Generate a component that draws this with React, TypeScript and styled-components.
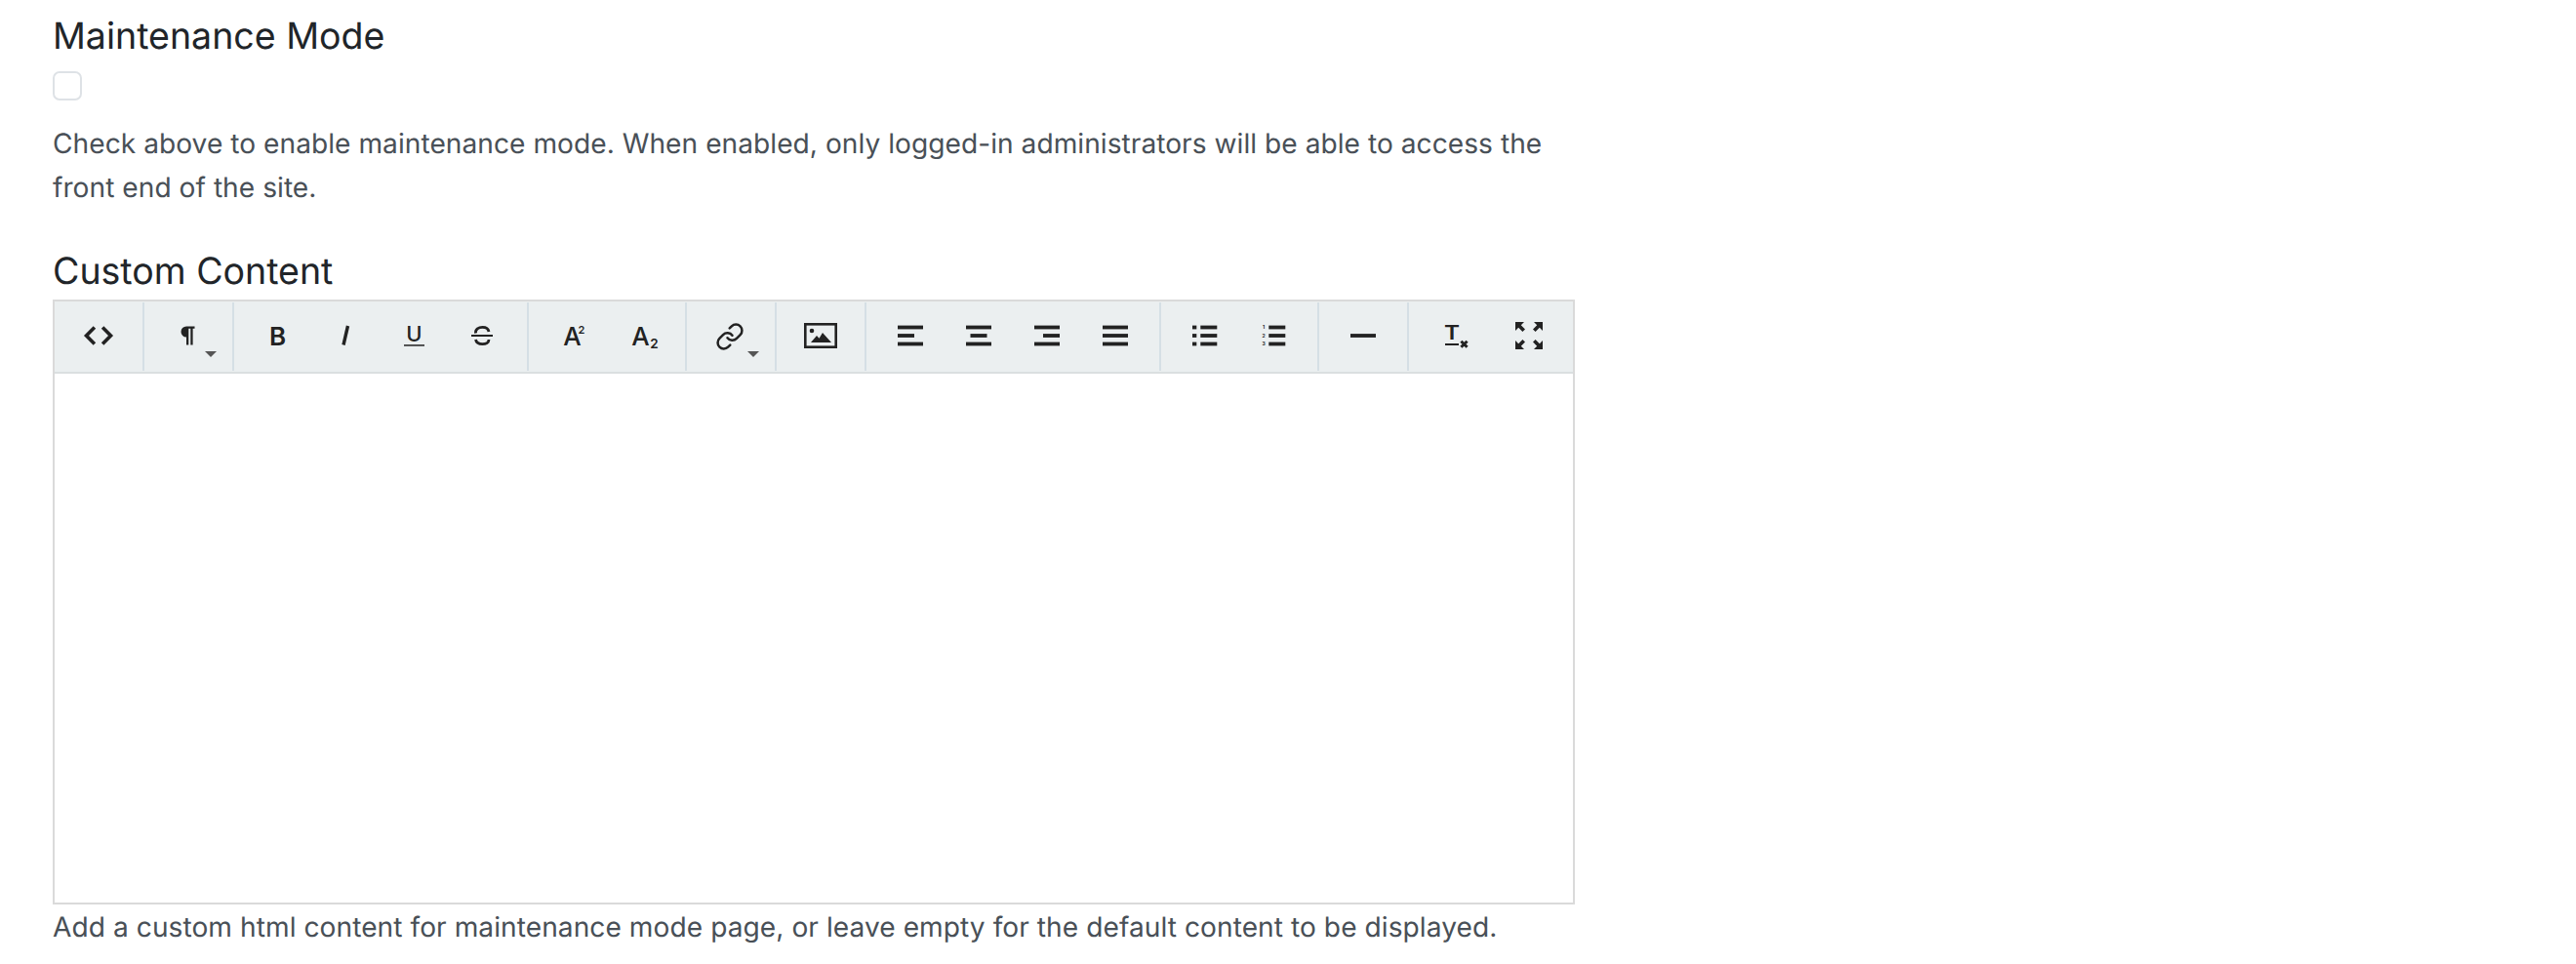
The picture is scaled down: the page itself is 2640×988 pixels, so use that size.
import React from "react";
import styled, { createGlobalStyle } from "styled-components";
import { Link } from "lucide-react";

const GlobalStyle = createGlobalStyle`
  html, body {
    margin: 0;
    padding: 0;
    background: #fff;
  }
  body {
    font-family: Inter, "Liberation Sans", sans-serif;
    text-rendering: geometricPrecision;
    overflow: hidden;
  }
`;

const Page = styled.div`
  width: 1560px;
  padding: 13px 0 0 54px;
`;

const Field = styled.section`
  margin-bottom: 39px;
`;

const Label = styled.label`
  display: block;
  margin-bottom: 3px;
  font-size: 37.5px;
  line-height: 50px;
  color: #212529;
`;

const CheckBox = styled.input.attrs({ type: "checkbox" })`
  display: block;
  appearance: none;
  box-sizing: border-box;
  width: 30px;
  height: 30px;
  margin: 10px 0 22px;
  background: #fff;
  border: 2px solid #dee2e6;
  border-radius: 7px;
`;

const Help = styled.p`
  margin: 0;
  font-size: 28.125px;
  line-height: 45px;
  letter-spacing: 0.04px;
  color: #495057;
`;

const Editor = styled.div`
  box-sizing: border-box;
  width: 1560px;
  height: 620px;
  border: 2px solid #dadada;
  background: #fff;
`;

const Toolbar = styled.div`
  display: flex;
  height: 74px;
  background: #ebeff0;
  border-bottom: 2px solid #dadfe0;
  box-sizing: border-box;
  padding: 0;
`;

const Group = styled.div<{ $end?: boolean }>`
  display: flex;
  flex: ${(p) => (p.$end ? "1" : "none")};
  align-items: center;
  height: 70px;
  margin-top: 1px;
  padding: 0 10px;
  border-right: ${(p) => (p.$end ? "none" : "2px solid #d5dfe5")};
`;

const ToolButton = styled.button<{ $right?: boolean }>`
  position: relative;
  display: flex;
  align-items: center;
  justify-content: center;
  width: 70px;
  height: 70px;
  margin-left: ${(p) => (p.$right ? "auto" : "0")};
  padding: 0;
  background: none;
  border: none;
  color: #222;
`;

const Caret = styled.span`
  position: absolute;
  right: 6px;
  bottom: 14px;
  width: 0;
  height: 0;
  border-left: 6px solid transparent;
  border-right: 6px solid transparent;
  border-top: 6px solid #555;
`;

const IconSvg = styled.svg`
  display: block;
  flex: none;
  width: 30px;
  height: 30px;
  margin-top: -2px;
  fill: currentColor;
  stroke: none;
  overflow: visible;

  text {
    font-family: Inter, "Liberation Sans", sans-serif;
  }
`;

const ImageSvg = styled(IconSvg)`
  width: 34px;
  height: 26px;
`;

const LinkGlyph = styled(Link)`
  display: block;
  margin: -1px 2px 0 0;
`;

const Content = styled.div`
  height: 542px;
`;

const Footnote = styled.p`
  margin: 1px 0 0;
  font-size: 28.125px;
  line-height: 44px;
  letter-spacing: 0.06px;
  color: #495057;
`;

const line = { fill: "none", stroke: "currentColor" };
const barY = (i: number) => 4.6 + i * 8.5;

const CodeIcon = () => (
  <IconSvg viewBox="0 0 30 30">
    <path d="M10.900 6.600 2.500 15l8.400 8.400M19.100 6.600 27.500 15l-8.400 8.400" {...line} strokeWidth={3.6} />
  </IconSvg>
);

const ParagraphIcon = () => (
  <IconSvg viewBox="0 0 30 30">
    <path d="M21.500 5.500H13a5.500 5.500 0 0 0 0 11v8h2.300V7.700h2v16.800h2.300V7.700h1.900z" />
  </IconSvg>
);

const BoldIcon = () => (
  <IconSvg viewBox="0 0 30 30">
    <text x="14.500" y="24.500" fontSize="26" fontWeight="600" textAnchor="middle">B</text>
  </IconSvg>
);

const ItalicIcon = () => (
  <IconSvg viewBox="0 0 30 30">
    <path d="M16.500 5 12 24.500" {...line} strokeWidth={3.4} />
  </IconSvg>
);

const UnderlineIcon = () => (
  <IconSvg viewBox="0 0 30 30">
    <text x="14.500" y="21" fontSize="22" fontWeight="500" textAnchor="middle">U</text>
    <rect x="4" y="24.200" width="21" height="1.500" />
  </IconSvg>
);

const StrikeIcon = () => (
  <IconSvg viewBox="0 0 30 30">
    <path d="M7.500 12.500C7 8 10.500 6.400 14.500 6.400c3.500 0 6 1.600 6.500 4.600M7.500 19c.5 3 3.500 4.600 7 4.600s6.500-1.500 6.500-4.600" {...line} strokeWidth={2.800} />
    <rect x="3" y="14" width="22" height="2" />
  </IconSvg>
);

const SuperIcon = () => (
  <IconSvg viewBox="0 0 30 30">
    <text x="14.500" y="24.500" fontSize="26" fontWeight="500" textAnchor="middle">A</text>
    <text x="20.500" y="13" fontSize="11" fontWeight="600">2</text>
  </IconSvg>
);

const SubIcon = () => (
  <IconSvg viewBox="0 0 30 30">
    <text x="14.500" y="24.500" fontSize="26" fontWeight="500" textAnchor="middle">A</text>
    <text x="24.300" y="28" fontSize="13.500" fontWeight="600">2</text>
  </IconSvg>
);

const ImageIcon = () => (
  <ImageSvg viewBox="0 0 34 26">
    <rect x="1.300" y="1.300" width="31.400" height="23.400" {...line} strokeWidth={2.600} />
    <circle cx="8" cy="8" r="2.300" />
    <path d="M7 20l6-7 2.500 2.800L19 10l9 10z" />
  </ImageSvg>
);

const Bars = ({ bars }: { bars: [number, number][] }) => (
  <IconSvg viewBox="0 0 30 30">
    {bars.map(([x, w], i) => (
      <rect key={i} x={x} y={barY(i)} width={w} height={3.8} />
    ))}
  </IconSvg>
);

const ListIcon = ({ numbered }: { numbered?: boolean }) => (
  <IconSvg viewBox="0 0 30 30">
    {[0, 1, 2].map((i) => (
      <React.Fragment key={i}>
        <rect x="10.300" y={barY(i)} width="17" height="3.800" />
        {numbered ? (
          <text x="5" y={barY(i) + 3.7} fontSize="5" fontWeight="700" textAnchor="middle">
            {i + 1}
          </text>
        ) : (
          <rect x="2" y={barY(i)} width="4.300" height="3.800" />
        )}
      </React.Fragment>
    ))}
  </IconSvg>
);

const RuleIcon = () => (
  <IconSvg viewBox="0 0 30 30">
    <rect x="2" y="13.100" width="26" height="3.800" />
  </IconSvg>
);

const ClearIcon = () => (
  <IconSvg viewBox="0 0 30 30">
    <text
      x="6"
      y="19"
      fontSize="19.500"
      fontWeight="600"
      textLength={16}
      lengthAdjust="spacingAndGlyphs"
    >
      T
    </text>
    <rect x="7" y="23" width="14" height="2" />
    <path d="M23.400 20.700l6.200 6.100M29.600 20.700l-6.200 6.100" {...line} strokeWidth={3} />
  </IconSvg>
);

const FullscreenIcon = () => (
  <IconSvg viewBox="0 0 30 30">
    {[0, 90, 180, 270].map((angle) => (
      <path
        key={angle}
        transform={`rotate(${angle} 15 15)`}
        d="M1 1h9L6.800 4.200 11 8.400 8.400 11 4.200 6.800 1 10z"
      />
    ))}
  </IconSvg>
);

export default function App() {
  return (
    <>
      <GlobalStyle />
      <Page>
        <Field>
          <Label>Maintenance Mode</Label>
          <CheckBox />
          <Help>
            Check above to enable maintenance mode. When enabled, only logged-in administrators
            will be able to access the front end of the site.
          </Help>
        </Field>
        <Label>Custom Content</Label>
        <Editor>
          <Toolbar>
            <Group>
              <ToolButton><CodeIcon /></ToolButton>
            </Group>
            <Group>
              <ToolButton><ParagraphIcon /><Caret /></ToolButton>
            </Group>
            <Group>
              <ToolButton><BoldIcon /></ToolButton>
              <ToolButton><ItalicIcon /></ToolButton>
              <ToolButton><UnderlineIcon /></ToolButton>
              <ToolButton><StrikeIcon /></ToolButton>
            </Group>
            <Group>
              <ToolButton><SuperIcon /></ToolButton>
              <ToolButton><SubIcon /></ToolButton>
            </Group>
            <Group>
              <ToolButton><LinkGlyph size={30} strokeWidth={2} /><Caret /></ToolButton>
            </Group>
            <Group>
              <ToolButton><ImageIcon /></ToolButton>
            </Group>
            <Group>
              <ToolButton><Bars bars={[[2, 26], [2, 17], [2, 26]]} /></ToolButton>
              <ToolButton><Bars bars={[[2, 26], [6.5, 17], [2, 26]]} /></ToolButton>
              <ToolButton><Bars bars={[[2, 26], [11, 17], [2, 26]]} /></ToolButton>
              <ToolButton><Bars bars={[[2, 26], [2, 26], [2, 26]]} /></ToolButton>
            </Group>
            <Group>
              <ToolButton><ListIcon /></ToolButton>
              <ToolButton><ListIcon numbered /></ToolButton>
            </Group>
            <Group>
              <ToolButton><RuleIcon /></ToolButton>
            </Group>
            <Group $end>
              <ToolButton><ClearIcon /></ToolButton>
              <ToolButton $right><FullscreenIcon /></ToolButton>
            </Group>
          </Toolbar>
          <Content />
        </Editor>
        <Footnote>
          Add a custom html content for maintenance mode page, or leave empty for the default
          content to be displayed.
        </Footnote>
      </Page>
    </>
  );
}
